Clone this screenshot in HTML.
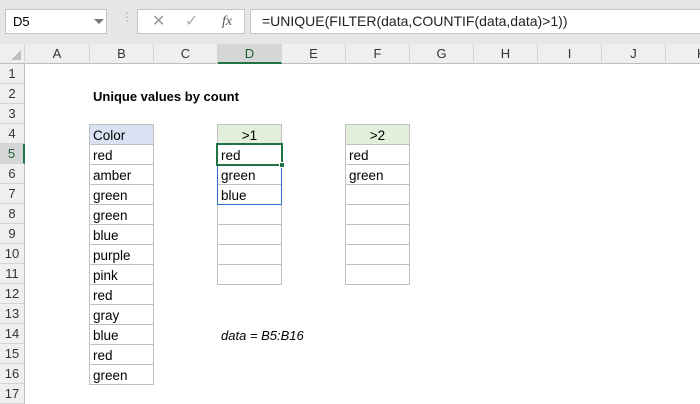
<!DOCTYPE html>
<html><head><style>
*{margin:0;padding:0;box-sizing:border-box}
body{width:700px;height:400px;background:#fff;font-family:"Liberation Sans",Calibri,sans-serif;position:relative;overflow:hidden;color:#000}
.a{position:absolute}
.top{left:0;top:0;width:700px;height:44px;background:#e6e6e6}
.box{background:#fff;border:1px solid #c6c6c6;height:25px;top:9px;font-size:13px;line-height:23px}
.ch{top:44px;height:20px;background:#efefef;border-bottom:1px solid #bdbdbd;border-right:1px solid #d4d4d4;font-size:13px;text-align:center;line-height:20px;color:#333}
.rh{left:0;width:25px;height:20px;background:#efefef;border-bottom:1px solid #d4d4d4;border-right:1px solid #bdbdbd;font-size:13px;text-align:center;line-height:20px;color:#333}
.c{height:21px;border:1px solid #bfbfbf;font-size:13.5px;line-height:21px;padding-left:3px;width:65px}
</style></head><body>
<div class="a top"></div>
<div class="a box" style="left:5px;width:102px;padding-left:7px">D5<span class="a" style="left:88px;top:9px;width:0;height:0;border-left:5px solid transparent;border-right:5px solid transparent;border-top:5px solid #777"></span></div>
<div class="a" style="left:121px;top:15px;color:#aaa;font-size:12px;line-height:4px">⋮</div>
<div class="a box" style="left:137px;width:108px;color:#999"><span class="a" style="left:14px;top:0;font-size:16px">✕</span><span class="a" style="left:47px;top:0;font-size:16px;color:#aaa">✓</span><span class="a" style="left:84px;top:0;font-family:'Liberation Serif',serif;font-style:italic;color:#555;font-size:14px">fx</span></div>
<div class="a box" style="left:250px;width:460px;padding-left:11px;font-size:14px;color:#222">=UNIQUE(FILTER(data,COUNTIF(data,data)&gt;1))</div>
<div class="a ch" style="left:0;width:25px;background:#efefef"><span class="a" style="right:3px;bottom:3px;width:0;height:0;border-left:10px solid transparent;border-bottom:10px solid #c0c0c0"></span></div>
<div class="a ch" style="left:25px;width:65px">A</div>
<div class="a ch" style="left:90px;width:64px">B</div>
<div class="a ch" style="left:154px;width:64px">C</div>
<div class="a ch" style="left:218px;width:64px;background:#d6d6d6;border-bottom:2px solid #217346;color:#1e5e37">D</div>
<div class="a ch" style="left:282px;width:64px">E</div>
<div class="a ch" style="left:346px;width:64px">F</div>
<div class="a ch" style="left:410px;width:64px">G</div>
<div class="a ch" style="left:474px;width:64px">H</div>
<div class="a ch" style="left:538px;width:64px">I</div>
<div class="a ch" style="left:602px;width:64px">J</div>
<div class="a ch" style="left:666px;width:64px;text-align:left;padding-left:31px">K</div>
<div class="a rh" style="top:64px">1</div><div class="a rh" style="top:84px">2</div><div class="a rh" style="top:104px">3</div><div class="a rh" style="top:124px">4</div>
<div class="a rh" style="top:144px;background:#d6d6d6;border-right:2px solid #217346;color:#1e5e37">5</div>
<div class="a rh" style="top:164px">6</div><div class="a rh" style="top:184px">7</div><div class="a rh" style="top:204px">8</div><div class="a rh" style="top:224px">9</div><div class="a rh" style="top:244px">10</div><div class="a rh" style="top:264px">11</div><div class="a rh" style="top:284px">12</div><div class="a rh" style="top:304px">13</div><div class="a rh" style="top:324px">14</div><div class="a rh" style="top:344px">15</div><div class="a rh" style="top:364px">16</div><div class="a rh" style="top:384px">17</div>
<div class="a" style="left:93px;top:89px;font-weight:bold;font-size:13px">Unique values by count</div>
<div class="a c" style="left:89px;top:124px;background:#d9e1f2">Color</div>
<div class="a c" style="left:89px;top:144px">red</div><div class="a c" style="left:89px;top:164px">amber</div><div class="a c" style="left:89px;top:184px">green</div><div class="a c" style="left:89px;top:204px">green</div><div class="a c" style="left:89px;top:224px">blue</div><div class="a c" style="left:89px;top:244px">purple</div><div class="a c" style="left:89px;top:264px">pink</div><div class="a c" style="left:89px;top:284px">red</div><div class="a c" style="left:89px;top:304px">gray</div><div class="a c" style="left:89px;top:324px">blue</div><div class="a c" style="left:89px;top:344px">red</div><div class="a c" style="left:89px;top:364px">green</div>
<div class="a c" style="left:217px;top:124px;background:#e2efda;text-align:center;padding:0">&gt;1</div>
<div class="a c" style="left:217px;top:144px">red</div><div class="a c" style="left:217px;top:164px">green</div><div class="a c" style="left:217px;top:184px">blue</div><div class="a c" style="left:217px;top:204px"></div><div class="a c" style="left:217px;top:224px"></div><div class="a c" style="left:217px;top:244px"></div><div class="a c" style="left:217px;top:264px"></div>
<div class="a" style="left:217px;top:164px;width:65px;height:41px;border:1px solid #2f6ec9"></div>
<div class="a" style="left:216px;top:143px;width:67px;height:23px;border:2px solid #217346"></div>
<div class="a" style="left:279px;top:162px;width:6px;height:6px;background:#217346;border:1px solid #fff"></div>
<div class="a c" style="left:345px;top:124px;background:#e2efda;text-align:center;padding:0">&gt;2</div>
<div class="a c" style="left:345px;top:144px">red</div><div class="a c" style="left:345px;top:164px">green</div><div class="a c" style="left:345px;top:184px"></div><div class="a c" style="left:345px;top:204px"></div><div class="a c" style="left:345px;top:224px"></div><div class="a c" style="left:345px;top:244px"></div><div class="a c" style="left:345px;top:264px"></div>
<div class="a" style="left:221px;top:328px;font-style:italic;font-size:13px">data = B5:B16</div>
</body></html>
